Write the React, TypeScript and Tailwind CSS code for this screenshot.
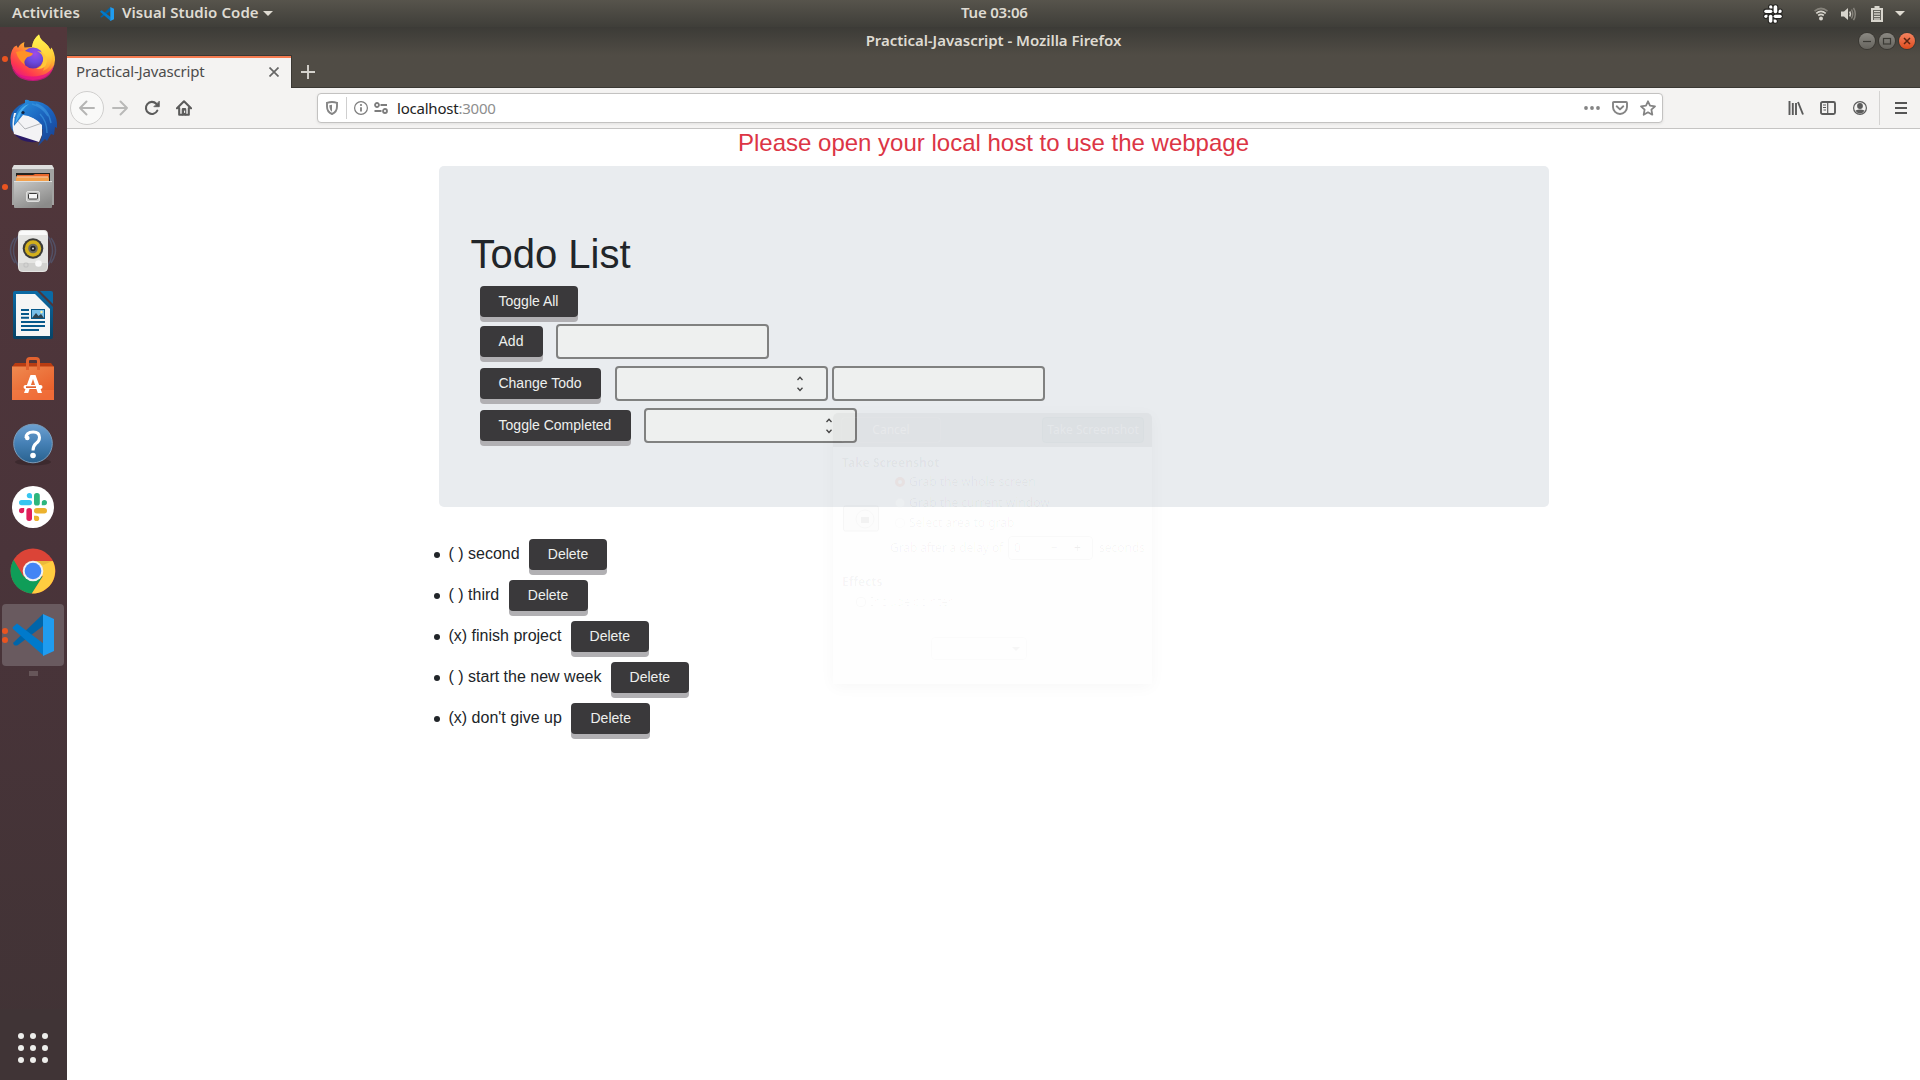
import React from 'react';

const ui = "font-['Noto_Sans',sans-serif]";

function SlackShape({ colors }: { colors: string[] }) {
  const [blue, green, yellow, red] = colors;
  return (
    <>
      <g fill={blue}>
        <path d="M10.4 0a2.6 2.6 0 1 0 0 5.2H13V2.6A2.6 2.6 0 0 0 10.4 0z" />
        <rect x="0" y="7" width="13" height="5.2" rx="2.6" />
      </g>
      <g fill={green}>
        <path d="M28 9.6a2.6 2.6 0 1 0-5.2 0v2.6h2.6A2.6 2.6 0 0 0 28 9.6z" />
        <rect x="15" y="0" width="5.8" height="12.6" rx="2.7" />
      </g>
      <g fill={yellow}>
        <path d="M17.6 28a2.6 2.6 0 1 0 0-5.2H15v2.6a2.6 2.6 0 0 0 2.6 2.6z" />
        <rect x="15" y="15" width="13" height="5.4" rx="2.7" />
      </g>
      <g fill={red}>
        <path d="M0 17.6a2.6 2.6 0 1 0 5.2 0V15H2.6A2.6 2.6 0 0 0 0 17.6z" />
        <rect x="7.4" y="15" width="5.6" height="13" rx="2.7" />
      </g>
    </>
  );
}

function VSCode({ className }: { className: string }) {
  return (
    <svg className={className} viewBox="0 0 42 42">
      <path d="M1 29 L31 0 V12 L6 31 Q4 32 2 31Z" fill="#0065a9" />
      <path d="M1 13 L5 9.5 L32 30 V42 L1 15 Q0 14 1 13Z" fill="#007acc" />
      <path d="M31 0 L42 5 V37 L31 42Z" fill="#1f9cf0" />
    </svg>
  );
}

function Firefox() {
  return (
    <svg className="mb-[2px] h-12 w-12" viewBox="0 0 48 48">
      <defs>
        <linearGradient id="ffBody" x1="0.85" y1="0.1" x2="0.25" y2="1">
          <stop offset="0" stopColor="#fff44f" />
          <stop offset="0.3" stopColor="#ffbd2f" />
          <stop offset="0.55" stopColor="#ff7139" />
          <stop offset="0.8" stopColor="#ff3750" />
          <stop offset="1" stopColor="#e31587" />
        </linearGradient>
        <radialGradient id="ffGlobe" cx="0.6" cy="0.3" r="0.8">
          <stop offset="0" stopColor="#a04be8" />
          <stop offset="0.5" stopColor="#6b4be0" />
          <stop offset="1" stopColor="#5a2a9c" />
        </radialGradient>
        <linearGradient id="ffTail" x1="0.5" y1="0" x2="0.6" y2="1">
          <stop offset="0" stopColor="#fff44f" />
          <stop offset="0.6" stopColor="#ffd23c" />
          <stop offset="1" stopColor="#ff9a30" />
        </linearGradient>
      </defs>
      <path d="M5 13 L7.5 11.5 L9 14 Q11 9.5 15.5 8 Q14.5 11 15.5 13.5 L23 13 Q24 5 30 0.5 Q31 5 35 8 Q40 12 41 16 L42.5 13.5 Q46 19 46 26 Q45.5 37 36 43 Q24 49 12 43 Q1.5 36 1.5 24 Q1.5 18 5 13Z" fill="url(#ffBody)" />
      <path d="M2 30 Q5 43 24 42.5 Q40 42 45 31 Q42 46.5 24 47 Q5 46.500 2 30Z" fill="#e0128a" opacity="0.75" />
      <path d="M23 13 Q24 5 30 0.500 Q31 5 35 8 Q44 15 43 25 Q42 34 34 37 Q38 28 34 21 Q29 15 23 13Z" fill="url(#ffTail)" />
      <circle cx="24" cy="24" r="10.5" fill="url(#ffGlobe)" />
      <path d="M7 18 Q11 16.500 16 17 Q20 18 24 19.500 Q23 22 18.500 23 Q17 24 15.500 27 Q15 29 16 31 Q9 26 7 18Z" fill="#ff9226" />
      <path d="M28 17 Q35 20 34 27 Q33 33 27 35 Q37 36 38 27 Q37 18 28 17Z" fill="#ffc83a" />
    </svg>
  );
}

function Thunderbird() {
  return (
    <svg className="h-12 w-12" viewBox="0 0 48 48">
      <defs>
        <linearGradient id="tbBird" x1="0.1" y1="0" x2="0.9" y2="1">
          <stop offset="0" stopColor="#2a93e0" />
          <stop offset="0.5" stopColor="#1b62bd" />
          <stop offset="1" stopColor="#183f8e" />
        </linearGradient>
      </defs>
      <path d="M1 24 Q1 8 18 3 L30 8 L34 30 L8 36 Q1 31 1 24Z" fill="#1b62b5" />
      <path d="M4 33 Q12 46 31 42.500 L8 33Z" fill="#2a1a66" />
      <path d="M5 14 L14 14 L33 23 L33 36 L30 43 L5 35 Q2 26 5 14Z" fill="#f3f3f5" />
      <path d="M5 18 L16 30 L36 23" fill="none" stroke="#a9abb0" strokeWidth="0.900" />
      <path d="M16 1 Q18 0 21 2 Q34 1 42 10 Q49 18 48 29 L46 28 L45 36 L42 35 L38 42 L36 40 L29 47 Q35 37 33 26 Q25 17 14 16 L5 27 Q4 12 16 4Z" fill="url(#tbBird)" />
      <path d="M23 5 Q34 8 39 17 M27 5 Q39 9 42 24 M31 15 Q38 22 38 34" fill="none" stroke="#3f9be3" strokeWidth="1.400" opacity="0.6" />
      <path d="M8 17 Q12 7 20 5 Q13 10 11 17 L6 25Z" fill="#4bb0ee" />
      <circle cx="14" cy="13.500" r="1.600" fill="#12233f" />
    </svg>
  );
}

function Files() {
  return (
    <svg className="h-12 w-12" viewBox="0 0 48 48">
      <defs>
        <linearGradient id="fc" x1="0" y1="0" x2="0.6" y2="1">
          <stop offset="0" stopColor="#c9c9c8" />
          <stop offset="1" stopColor="#8b8b8a" />
        </linearGradient>
      </defs>
      <path d="M3 5 L5 2 H43 L45 5 V42 H3Z" fill="#a3a3a2" />
      <path d="M3 6 L5 2 H43 L45 6Z" fill="#dededd" />
      <rect x="7" y="10" width="34" height="12" fill="#242220" />
      <path d="M8 12 H24 L26 11 H40 V18 H8Z" fill="#e8672c" />
      <path d="M7 14.500 H40 V18 H7Z" fill="#f3a04c" />
      <path d="M7 14 H39" stroke="#ffe2b8" strokeWidth="1" />
      <path d="M5 18 H43 V44 Q43 45 42 45 H6 Q5 45 5 44Z" fill="url(#fc)" />
      <path d="M5 18.500 H43" stroke="#e0e0df" strokeWidth="1" />
      <rect x="17.500" y="28.500" width="13" height="10" rx="1.500" fill="#c4c4c3" stroke="#dededd" />
      <rect x="19.500" y="30.500" width="9" height="5.500" rx="1" fill="#f5f5f5" stroke="#3a3a3a" />
    </svg>
  );
}

function Rhythmbox() {
  return (
    <svg className="h-12 w-12" viewBox="0 0 48 48">
      <g fill="none" stroke="#55698e" strokeWidth="1.500" opacity="0.5">
        <path d="M6 11 Q-3 23 6 36 M10 8 Q-1 23 10 40 M42 11 Q51 23 42 36 M38 8 Q49 23 38 40" />
      </g>
      <path d="M13 3 H35 Q39 3 39 8 V40 Q39 45 34 45 H14 Q9 45 9 40 V8 Q9 3 13 3Z" fill="#e4e4e2" />
      <path d="M13 4 H35 Q38 4 38 8 H10 Q10 4 13 4Z" fill="#fafafa" />
      <path d="M10 36 H38 V40 Q38 44 34 44 H14 Q10 44 10 40Z" fill="#d2d2d0" />
      <circle cx="24" cy="21.500" r="10.300" fill="#3b3b38" />
      <circle cx="24" cy="21.500" r="8.200" fill="#d3b01c" />
      <circle cx="24" cy="21.500" r="4.800" fill="#6c6a61" />
      <circle cx="24" cy="21.500" r="2.700" fill="#242424" />
      <circle cx="24" cy="21.500" r="1" fill="#ddd" />
      <circle cx="29.500" cy="36.500" r="3.300" fill="#f8f8f8" />
      <rect x="15" y="36" width="4" height="4" rx="1" fill="none" stroke="#b5b5b5" strokeWidth="0.600" />
    </svg>
  );
}

function Writer() {
  return (
    <svg className="h-12 w-12" viewBox="0 0 48 48">
      <defs>
        <linearGradient id="wr" x1="0" y1="0" x2="0" y2="1">
          <stop offset="0" stopColor="#0b6aa5" />
          <stop offset="1" stopColor="#074366" />
        </linearGradient>
      </defs>
      <path d="M6 0 H28 L44 16 V46 Q44 48 42 48 H6 Q4 48 4 46 V2 Q4 0 6 0Z" fill="url(#wr)" />
      <path d="M31 0 H42 Q44 0 44 2 V13Z" fill="#0b6aa5" />
      <path d="M7 3 H26 L41 18 V45 H7Z" fill="#f5f5f5" />
      <path d="M12 19 H20 M12 22.900 H20 M12 26.800 H20 M12 31 H36 M12 35 H36 M12 39 H30" stroke="#07588a" strokeWidth="2" />
      <rect x="22.500" y="18.500" width="13" height="9" fill="#79bfe9" stroke="#07588a" />
      <path d="M23 27 L27 22 L29.500 25 L32 23 L35 27Z" fill="#2e4350" />
      <circle cx="32.500" cy="21" r="1.200" fill="#fff2a0" />
    </svg>
  );
}

function Software() {
  return (
    <svg className="h-12 w-12" viewBox="0 0 48 48">
      <defs>
        <linearGradient id="sw" x1="0" y1="0" x2="0.700" y2="1">
          <stop offset="0" stopColor="#ef8a50" />
          <stop offset="1" stopColor="#e95c28" />
        </linearGradient>
      </defs>
      <path d="M3 12 L6 8 H42 L45 12Z" fill="#b93c12" />
      <path d="M3 11.500 H45 V45 H3Z" fill="url(#sw)" />
      <path d="M3 35 H45 V45 H3Z" fill="#f9824d" opacity="0.400" />
      <path d="M18.500 15 V6 Q18.500 3.500 21 3.500 H27 Q29.500 3.500 29.500 6 V15" fill="none" stroke="#e2622f" strokeWidth="3" />
      <path d="M21.500 20 H26.500 L33 38 H28.800 L24 24 L19.200 38 H15Z" fill="#fff" />
      <rect x="14.500" y="30" width="19" height="4" rx="2" fill="#fff" />
      <rect x="17" y="31.300" width="10" height="1.700" fill="#e2622f" />
    </svg>
  );
}

function Help() {
  return (
    <svg className="h-12 w-12" viewBox="0 0 48 48">
      <defs>
        <linearGradient id="hp" x1="0" y1="0" x2="0" y2="1">
          <stop offset="0" stopColor="#6da0d0" />
          <stop offset="0.500" stopColor="#4580b5" />
          <stop offset="1" stopColor="#29628f" />
        </linearGradient>
      </defs>
      <ellipse cx="24" cy="43" rx="18" ry="3.500" fill="#000" opacity="0.200" />
      <circle cx="24" cy="24.500" r="19.300" fill="url(#hp)" stroke="#7b9dbb" strokeWidth="1" />
      <path d="M17 19 Q17 13 24.200 13 Q30.500 13 30.500 18.500 Q30.500 22 27 24.500 Q24 27 24 31.500" fill="none" stroke="#fff" strokeWidth="3" />
      <circle cx="18.300" cy="19" r="2.300" fill="#fff" />
      <circle cx="24" cy="36.500" r="2.800" fill="#fff" />
    </svg>
  );
}

function SlackDock() {
  return (
    <svg className="h-12 w-12" viewBox="0 0 48 48">
      <circle cx="24" cy="24" r="21" fill="#fff" />
      <g transform="translate(10 10)">
        <SlackShape colors={['#36c5f0', '#2eb67d', '#ecb22e', '#e01e5a']} />
      </g>
    </svg>
  );
}

function Chrome() {
  return (
    <svg className="h-12 w-12" viewBox="0 0 48 48">
      <circle cx="24" cy="24" r="22.400" fill="#db4437" />
      <path d="M4.600 12.800 A22.400 22.400 0 0 0 23 46.400 L33.500 29.500 L14.500 29.500Z" fill="#0f9d58" />
      <path d="M43.800 14 A22.400 22.400 0 0 1 22.800 46.400 L33.700 29.500 L24 14Z" fill="#ffcd40" />
      <path d="M24 14 H43.800 L34 18Z" fill="#d8a835" opacity="0.500" />
      <circle cx="24" cy="24" r="10.300" fill="#f1f1f1" />
      <circle cx="24" cy="24" r="8.300" fill="#4285f4" />
    </svg>
  );
}

function DockItem({ children, dots = 0, active = false }: { children: React.ReactNode; dots?: number; active?: boolean }) {
  return (
    <div className="flex h-16 w-full shrink-0 items-center">
      <div className={active ? 'ml-[2px] flex h-[62px] w-[62px] items-center rounded bg-[#695a5f]' : 'ml-[2px] flex h-[62px] w-[62px] items-center'}>
        <div className="flex w-[7px] flex-col gap-[3px]">
          {Array.from({ length: dots }).map((_, i) => (
            <span key={i} className="block h-[6px] w-[6px] rounded-full bg-[#e95420]" />
          ))}
        </div>
        {children}
      </div>
    </div>
  );
}

function Dock() {
  return (
    <nav className="flex w-[67px] shrink-0 flex-col bg-linear-to-b from-[#52373b] via-[#4a343a] to-[#403335]">
      <DockItem dots={1}><Firefox /></DockItem>
      <DockItem><Thunderbird /></DockItem>
      <DockItem dots={1}><Files /></DockItem>
      <DockItem><Rhythmbox /></DockItem>
      <DockItem><Writer /></DockItem>
      <DockItem><Software /></DockItem>
      <DockItem><Help /></DockItem>
      <DockItem><SlackDock /></DockItem>
      <DockItem><Chrome /></DockItem>
      <DockItem dots={2} active>
        <VSCode className="ml-[3px] h-[42px] w-[42px]" />
      </DockItem>
      <span className="mt-1 ml-[29px] block h-[5px] w-[9px] bg-[#665659]" />
      <div className="mt-auto flex h-[71px] w-full justify-center bg-[#403436] pt-[24px] pr-[1px]">
        <div className="grid h-[30px] grid-cols-3 gap-[6px]">
          {Array.from({ length: 9 }).map((_, i) => (
            <span key={i} className="block h-[6px] w-[6px] rounded-full bg-[#eeeeec]" />
          ))}
        </div>
      </div>
    </nav>
  );
}

function TopBar() {
  return (
    <header className={`${ui} flex h-[27px] shrink-0 items-center bg-linear-to-b from-[#57544c] to-[#3f3e39] text-[15px] leading-[25px] font-semibold text-[#dfdbd2]`}>
      <div className="flex w-[961px] items-center">
        <span className="mb-[2px] ml-3 w-[88px] tracking-[0.1px]">Activities</span>
        <VSCode className="h-[14px] w-[14px]" />
        <span className="mb-[2px] ml-[8px] w-[135px] tracking-[0.08px] whitespace-nowrap">Visual Studio Code</span>
        <svg className="ml-[6px] h-[5px] w-[10px]" viewBox="0 0 10 5"><path d="M0 0H10L5 5Z" fill="#dfdbd2" /></svg>
      </div>
      <span className="mb-[2px] w-[72px] tracking-[-0.2px] whitespace-nowrap">Tue 03:06</span>
      <div className="ml-auto flex items-center">
        <svg className="h-5 w-5" viewBox="-2 -2 32 32">
          <g stroke="#262522" strokeWidth="3.500"><SlackShape colors={['#fff', '#fff', '#fff', '#fff']} /></g>
          <SlackShape colors={['#fff', '#fff', '#fff', '#fff']} />
        </svg>
        <svg className="ml-[31px] h-[14px] w-[14px]" viewBox="0 0 14 14" fill="none" stroke="#d8d5cd" strokeWidth="1.700">
          <path d="M0.500 4.200 Q7 -1.200 13.500 4.200" stroke="#85827a" />
          <path d="M2.300 6.300 Q7 2.500 11.700 6.300" />
          <path d="M4.200 8.500 Q7 6.200 9.800 8.500" />
          <circle cx="7" cy="11.500" r="2" fill="#d8d5cd" stroke="none" />
        </svg>
        <svg className="ml-[13px] h-[14px] w-[15px]" viewBox="0 0 15 14" fill="none" strokeWidth="1.500">
          <path d="M0 4.500H3L7 1V13L3 9.500H0Z" fill="#d8d5cd" />
          <path d="M8.700 4.500Q10.300 7 8.700 9.500" stroke="#d8d5cd" />
          <path d="M10.500 2.500Q13 7 10.500 11.500M12.500 0.800Q16 7 12.500 13.200" stroke="#85827a" />
        </svg>
        <svg className="ml-[15px] h-4 w-3" viewBox="0 0 12 16">
          <path d="M3.500 0H8.500V2H12V16H0V2H3.500Z" fill="#d8d5cd" />
          <path d="M2.200 4H9.800V14H2.200Z" fill="#494741" />
          <path d="M3 5.500H9M3 8H9M3 10.500H9M3 13H9" stroke="#d8d5cd" strokeWidth="1.300" />
        </svg>
        <svg className="mr-[15px] ml-3 h-[5px] w-[10px]" viewBox="0 0 10 5"><path d="M0 0H10L5 5Z" fill="#dfdbd2" /></svg>
      </div>
    </header>
  );
}

function WinButton({ children, close = false }: { children: React.ReactNode; close?: boolean }) {
  return (
    <span className={close
      ? 'flex h-4 w-4 items-center justify-center rounded-full bg-linear-to-b from-[#f5835f] to-[#dc4a18] shadow-[0_0_0_1px_#3a3833]'
      : 'flex h-4 w-4 items-center justify-center rounded-full bg-linear-to-b from-[#8b8983] to-[#66645e] shadow-[0_0_0_1px_#3a3833]'}>
      <svg className="h-[10px] w-[10px]" viewBox="0 0 10 10" fill="none" stroke="#3b3a35" strokeWidth="1.200">{children}</svg>
    </span>
  );
}

function TitleBar() {
  return (
    <div className={`${ui} flex h-[61px] flex-col border-b border-[#3a3833] bg-linear-to-b from-[#3c3b37] to-[#504c45] to-[28px]`}>
      <div className="flex h-7 items-center">
        <span className="w-20" />
        <span className="mb-[2px] flex-1 text-center text-[15px] leading-[26px] font-semibold tracking-[-0.05px] text-[#dfdbd2]">Practical-Javascript - Mozilla Firefox</span>
        <div className="flex w-[80px] items-center justify-end gap-1 pr-[5px]">
          <WinButton><path d="M1 5.500H9" /></WinButton>
          <WinButton><rect x="1.500" y="2.500" width="7" height="5.500" /></WinButton>
          <WinButton close><path d="M2 2L8 8M8 2L2 8" stroke="#5a2410" strokeWidth="1.500" /></WinButton>
        </div>
      </div>
      <div className="-mb-px flex h-[33px] items-center">
        <div className="flex h-full w-[225px] items-center border-t border-r border-[#3a3833] bg-[#f4f3f2] shadow-[inset_0_2px_0_#f57b50]">
          <span className="mb-[2px] ml-[9px] w-[193px] text-[15px] tracking-[-0.16px] text-[#4c4c4c]">Practical-Javascript</span>
          <svg className="h-[10px] w-[10px]" viewBox="0 0 10 10" stroke="#666" strokeWidth="1.700"><path d="M0.500 0.500L9.500 9.500M9.500 0.500L0.500 9.500" /></svg>
        </div>
        <svg className="ml-[9px] h-[14px] w-[14px]" viewBox="0 0 14 14" stroke="#d5d3cd" strokeWidth="1.900"><path d="M7 0V14M0 7H14" /></svg>
      </div>
    </div>
  );
}

function Cell({ children, w = 'w-8' }: { children: React.ReactNode; w?: string }) {
  return <span className={`${w} flex shrink-0 items-center justify-center`}>{children}</span>;
}

function ToolBar() {
  return (
    <div className={`${ui} flex h-[41px] items-center border-b border-[#c5c4c3] bg-[#f4f3f2] pl-[3px]`}>
      <span className="flex h-[34px] w-[34px] items-center justify-center rounded-full border border-[#d0cfce] bg-[#f9f9f8]">
        <svg className="h-4 w-4" viewBox="0 0 16 16" fill="none" stroke="#b5b5b4" strokeWidth="1.900" strokeLinecap="round" strokeLinejoin="round"><path d="M7.500 1.500L1 8L7.500 14.500M1 8H15" /></svg>
      </span>
      <Cell>
        <svg className="h-4 w-4" viewBox="0 0 16 16" fill="none" stroke="#b9b9b8" strokeWidth="1.900" strokeLinecap="round" strokeLinejoin="round"><path d="M8.500 1.500L15 8L8.500 14.500M15 8H1" /></svg>
      </Cell>
      <Cell>
        <svg className="h-4 w-4" viewBox="0 0 16 16" fill="none" stroke="#5b5b5b" strokeWidth="2.100" strokeLinecap="round"><path d="M13.300 10.600A6 6 0 1 1 12.300 3.800" /><path d="M15.300 1.500V6.700H10.200Z" fill="#5b5b5b" stroke="#5b5b5b" strokeWidth="0.800" /></svg>
      </Cell>
      <Cell>
        <svg className="h-4 w-4" viewBox="0 0 16 16" fill="none" stroke="#5b5b5b" strokeWidth="2.100" strokeLinecap="round" strokeLinejoin="round"><path d="M1 8.300L8 1.300L15 8.300M3.200 8V14.700H12.800V8" /><path d="M6.300 15V9.500Q6.300 8.700 7 8.700H9Q9.700 8.700 9.700 9.500V15" strokeWidth="1.200" fill="#5b5b5b" /><path d="M8.600 11V12.500" stroke="#fff" strokeWidth="1" /></svg>
      </Cell>
      <div className="ml-[117px] flex h-[30px] w-[1346px] items-center rounded-[4px] border border-[#c3c2c1] bg-white shadow-[0_1px_3px_rgba(0,0,0,0.08)]">
        <Cell w="w-7">
          <svg className="h-[14px] w-3" viewBox="0 0 12 14"><path d="M1 1.800Q6 0.200 11 1.800V5.500Q11 11 6 13Q1 11 1 5.500Z" fill="none" stroke="#858585" strokeWidth="1.900" /><path d="M6 3.700V10.700Q3.300 8.800 3.300 4.200Z" fill="#858585" /></svg>
        </Cell>
        <span className="h-[22px] w-px bg-[#cfcfcf]" />
        <Cell w="w-7">
          <svg className="h-[14px] w-[14px]" viewBox="0 0 14 14"><circle cx="7" cy="7" r="6.400" fill="none" stroke="#7d7d7d" strokeWidth="1.200" /><path d="M7 6.200V10.500" stroke="#7d7d7d" strokeWidth="1.800" /><circle cx="7" cy="4" r="1.100" fill="#7d7d7d" /></svg>
        </Cell>
        <Cell w="w-3">
          <svg className="h-3 w-[14px] shrink-0" viewBox="0 0 14 12" fill="none" stroke="#7d7d7d" strokeWidth="1.800"><circle cx="3" cy="3" r="2" /><path d="M6.500 3H13M0.500 9H7.500" /><circle cx="11" cy="9" r="2" /></svg>
        </Cell>
        <span className="ml-[10px] text-[15px] leading-[26px] tracking-[-0.22px] text-[#8e8e8e]"><span className="text-[#222]">localhost</span>:3000</span>
        <div className="ml-auto flex items-center">
          <Cell w="w-7">
            <svg className="h-1 w-4" viewBox="0 0 16 4" fill="#848484"><circle cx="2" cy="2" r="1.900" /><circle cx="8" cy="2" r="1.900" /><circle cx="14" cy="2" r="1.900" /></svg>
          </Cell>
          <Cell w="w-7">
            <svg className="h-[14px] w-4" viewBox="0 0 16 14" fill="none" stroke="#848484" strokeWidth="1.900" strokeLinecap="round" strokeLinejoin="round"><path d="M1.900 1H14.100Q15 1 15 1.900V6A7 7 0 0 1 1 6V1.900Q1 1 1.900 1Z" /><path d="M4.700 5.300L8 8.400L11.300 5.300" /></svg>
          </Cell>
          <Cell w="w-7">
            <svg className="h-4 w-4" viewBox="0 0 16 16" fill="none" stroke="#848484" strokeWidth="1.800" strokeLinejoin="round"><path d="M8 1.300L10 5.700L15 6.300L11.400 9.700L12.300 14.700L8 12.300L3.700 14.700L4.600 9.700L1 6.300L6 5.700Z" /></svg>
          </Cell>
        </div>
      </div>
      <div className="ml-[117px] flex items-center">
        <Cell>
          <svg className="h-[14px] w-4" viewBox="0 0 16 14" stroke="#5b5b5b" strokeWidth="1.900"><path d="M1.500 0V14M4.800 2V14M8 2V14M10 1L15 13.500" /></svg>
        </Cell>
        <Cell>
          <svg className="h-[14px] w-4" viewBox="0 0 16 14" fill="none" stroke="#5b5b5b" strokeWidth="1.900"><rect x="1" y="1" width="14" height="12" rx="1.500" /><path d="M7.700 1V13" strokeWidth="1.200" /><path d="M3 4H6M3 6.500H6M3.500 9H6" strokeWidth="1" /></svg>
        </Cell>
        <Cell>
          <svg className="h-[14px] w-[14px]" viewBox="0 0 14 14"><circle cx="7" cy="7" r="6.400" fill="none" stroke="#5b5b5b" strokeWidth="1.200" /><circle cx="7" cy="5" r="2.900" fill="#5b5b5b" /><path d="M2.500 9.500Q7 7.500 11.500 9.500Q10 12.500 7 12.500Q4 12.500 2.500 9.500Z" fill="#5b5b5b" /></svg>
        </Cell>
        <span className="ml-[3px] h-[34px] w-px bg-[#d4d3d2]" />
        <span className="ml-[15px] flex w-3 flex-col gap-[3px]">
          <span className="h-[2px] bg-[#555]" />
          <span className="h-[2px] bg-[#555]" />
          <span className="h-[2px] bg-[#555]" />
        </span>
      </div>
    </div>
  );
}

function Btn({ children, w }: { children: string; w: string }) {
  return (
    <button className={`${w} h-[31px] shrink-0 rounded-[4px] bg-[#3a393b] pb-[2px] text-center text-[14px] leading-none whitespace-nowrap text-[#eef0ee] shadow-[0_5px_0_#b1b0b3]`}>
      {children}
    </button>
  );
}

function Field({ spin = false }: { spin?: boolean }) {
  return (
    <div className="flex h-[35px] w-[213px] shrink-0 items-center rounded-[4px] border-2 border-[#808180] bg-[#eef0ef]">
      {spin && (
        <svg className="ml-[180px] h-4 w-[6px]" viewBox="0 0 6 16" fill="none" stroke="#444" strokeWidth="1.300">
          <path d="M0.500 4L3 1.300L5.500 4M0.500 11.800L3 14.500L5.500 11.800" />
        </svg>
      )}
    </div>
  );
}

function Radio({ on = false, label }: { on?: boolean; label: string }) {
  return (
    <div className="flex h-[20.500px] items-center gap-1">
      <span className={on ? 'h-[10px] w-[10px] rounded-full border-[3px] border-[#d63000]/5' : 'h-[10px] w-[10px] rounded-full border border-black/1 bg-white/20'} />
      <span>{label}</span>
    </div>
  );
}

/* Screenshot tool window in the last frames of its fade-out. */
function FadingDialog() {
  return (
    <div className={`${ui} absolute top-[413px] left-[833px] flex h-[271px] w-[319px] flex-col rounded-t-[5px] text-[12px] leading-[14px] whitespace-nowrap text-black/4 shadow-[0_3px_16px_rgba(0,0,0,0.035)]`}>
      <div className="flex h-[34px] items-center justify-between rounded-t-[5px] bg-black/[0.038] pr-2 text-white/25">
        <span className="ml-2 w-[100px] rounded-sm border border-white/5 py-[5px] text-center">Cancel</span>
        <span className="w-[102px] rounded-sm border border-green-700/1 bg-green-700/1 py-[5px] text-center">Take Screenshot</span>
      </div>
      <div className="flex flex-1 flex-col bg-black/[0.004]">
        <span className="mt-[9px] ml-[9px] h-[16px] font-bold">Take Screenshot</span>
        <div className="flex h-[62px]">
          <svg className="mt-[32px] ml-[10px] h-7 w-9" viewBox="0 0 36 28" opacity="0.045">
            <rect x="0.500" y="2" width="35" height="25" rx="2" fill="#ddd" stroke="#666" />
            <circle cx="22" cy="15" r="9" fill="#ddd" stroke="#777" />
            <rect x="18" y="13" width="8" height="6" fill="#001" />
          </svg>
          <div className="ml-[16px]">
            <Radio on label="Grab the whole screen" />
            <Radio label="Grab the current window" />
            <Radio label="Select area to grab" />
          </div>
        </div>
        <div className="mt-[2px] flex h-6 items-center pl-[57px]">
          <span className="w-[118px] tracking-[-0.1px]">Grab after a delay of</span>
          <span className="flex h-6 w-[85px] items-center rounded border border-black/2 pl-[5px]">
            <span className="w-[37px]">0</span><span className="w-[23px]">−</span><span className="text-black/8">+</span>
          </span>
          <span className="ml-[6px]">seconds</span>
        </div>
        <span className="mt-[15px] ml-[9px] font-bold">Effects</span>
        <div className="mt-[6px] ml-[23px] flex items-center gap-1 text-black/3">
          <span className="h-[10px] w-[10px] rounded-sm border border-black/2" />
          <span className="tracking-[-0.25px]">Include pointer</span>
        </div>
        <div className="mt-[7px] ml-[23px] flex items-center gap-1 text-black/2">
          <span className="w-[10px]">✓</span>
          <span className="tracking-[-0.25px]">Include the window border</span>
        </div>
        <div className="mt-[7px] ml-[18px] flex items-center text-black/2">
          <span className="w-20">Apply effect:</span>
          <span className="flex h-[23px] w-[96px] items-center justify-between rounded border border-black/1 px-[6px]">
            None
            <svg className="h-1 w-2" viewBox="0 0 8 4"><path d="M0 0H8L4 4Z" fill="#000" opacity="0.030" /></svg>
          </span>
        </div>
      </div>
    </div>
  );
}

const todos = [
  { text: '( ) second', w: 'w-[78px]' },
  { text: '( ) third', w: 'w-[79px]' },
  { text: '(x) finish project', w: 'w-[78px]' },
  { text: '( ) start the new week', w: 'w-[78px]' },
  { text: "(x) don't give up", w: 'w-[79px]' },
];

function Page() {
  return (
    <main className="flex-1 bg-white font-['Liberation_Sans',Arial,sans-serif] text-[#212529]">
      <div className="mx-auto w-[1110px]">
        <h4 className="mb-[10px] text-center text-[24px] leading-[27px] text-[#dc3545]">Please open your local host to use the webpage</h4>
        <section className="h-[341px] rounded-[5px] bg-[#e9ecef] px-8 pt-16">
          <h1 className="mb-2 text-[40px] leading-[48px]">Todo List</h1>
          <div className="flex h-[38px] pl-[9px]"><Btn w="w-[98px]">Toggle All</Btn></div>
          <div className="flex h-[42px] items-start pl-[9px]">
            <span className="mt-[2px] mr-[13px] flex"><Btn w="w-[63px]">Add</Btn></span>
            <Field />
          </div>
          <div className="flex h-[42px] items-start pl-[9px]">
            <span className="mt-[2px] mr-[14px] flex"><Btn w="w-[121px]">Change Todo</Btn></span>
            <Field spin />
            <span className="w-1" />
            <Field />
          </div>
          <div className="flex h-[42px] items-start pl-[9px]">
            <span className="mt-[2px] mr-[13px] flex"><Btn w="w-[151px]">Toggle Completed</Btn></span>
            <Field spin />
          </div>
        </section>
        <ul className="mt-8 flex flex-col gap-[10px] pl-[10px]">
          {todos.map((t) => (
            <li key={t.text} className="-ml-[14.500px] flex h-[31px] items-center">
              <span className="mr-[8.500px] h-[6px] w-[6px] rounded-full bg-[#212529]" />
              <span className="mr-[9.400px] pb-[1px] text-[16px] leading-6">{t.text}</span>
              <Btn w={t.w}>Delete</Btn>
            </li>
          ))}
        </ul>
      </div>
    </main>
  );
}

export default function App() {
  return (
    <div className="relative flex h-[1080px] w-[1920px] flex-col overflow-hidden">
      <TopBar />
      <div className="flex min-h-0 flex-1">
        <Dock />
        <div className="flex flex-1 flex-col">
          <TitleBar />
          <ToolBar />
          <Page />
        </div>
      </div>
      <FadingDialog />
    </div>
  );
}
